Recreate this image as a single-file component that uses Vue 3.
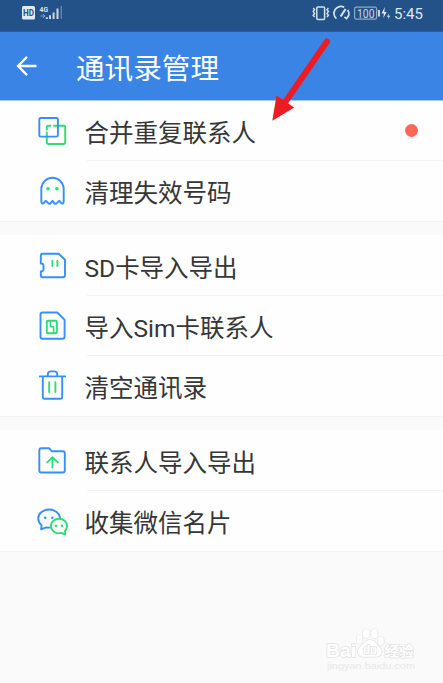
<template>
  <div class="page">
    <header class="status-bar">
      <svg class="status-left" viewBox="0 0 50 20">
        <rect x="2" y="3" width="13" height="13.5" rx="1.5" fill="#e3e9f1" />
        <text class="hd" x="3" y="12.8" textLength="11" lengthAdjust="spacingAndGlyphs">HD</text>
        <text class="net" x="19.5" y="9" textLength="8.5" lengthAdjust="spacingAndGlyphs">4G</text>
        <path d="M20.5 13h4M23 11.2l2 1.8-2 1.8" stroke="#8ba4c1" stroke-width="1" fill="none" />
        <path d="M26.8 16v-1.8M30 16v-3.8M33.6 16V9.5M37.5 16V5.5" stroke="#cbd7e4" stroke-width="2" />
        <path d="M41.3 16V3" stroke="#6587ae" stroke-width="1.4" />
      </svg>
      <svg class="status-icons" viewBox="0 0 80 20" fill="none" stroke="#d7e1ec" stroke-width="1.5">
        <rect x="5.8" y="4" width="7.8" height="12.4" rx="1" />
        <path d="M2.2 5l1.4 1.8-1.4 1.8 1.4 1.8-1.4 1.8 1.4 1.8M17.4 5L16 6.800l1.4 1.8-1.4 1.8 1.4 1.8-1.4 1.8" />
        <path d="M25.4 15.6A6.9 6.9 0 0 1 33.2 4.3M36.7 7a6.9 6.9 0 0 1-1.2 8.6l-2-1.8" stroke-width="1.7" />
        <path d="M29.6 13.5l5-7.5" stroke-width="2.2" />
        <rect x="43.6" y="4.2" width="22" height="12" rx="1.6" stroke="#8fa8c5" stroke-width="1.2" />
        <path d="M68 7v6.5" stroke-width="1.8" />
        <text class="battery" x="46" y="14.5" textLength="17.6" lengthAdjust="spacingAndGlyphs">100</text>
        <path d="M73.8 4l-3.3 6.500h2.4l-.6 4.500 3.4-6h-2.4zM77.6 10.5l-1.6 3.2h1.5l-.3 2.8 1.9-3.8h-1.5z" fill="#e3e9f1" stroke="none" />
      </svg>
      <span class="clock">5:45</span>
    </header>

    <div class="title-bar">
      <svg class="back" viewBox="0 0 22 22">
        <path d="M11 1.9L2 11l9 9.1M2 11h18.5" />
      </svg>
      <h1>通讯录管理</h1>
    </div>

    <main>
      <section v-for="(group, idx) in groups" :key="idx" class="group">
        <div v-for="item in group" :key="item.icon" class="row">
          <svg class="icon" viewBox="0 0 32 32">
            <template v-if="item.icon === 'merge'">
              <path class="green" d="M10.8 14.5v-2.3q0-1.4 1.4-1.4h2.3M18 10.8h9.8q1.4 0 1.4 1.4v15.4q0 1.4-1.4 1.4H12.2q-1.4 0-1.4-1.4V17.5" />
              <rect class="blue" x="3.3" y="3" width="18.6" height="18.6" rx="1.4" />
            </template>
            <template v-else-if="item.icon === 'ghost'">
              <path class="blue" d="M5.3 26V14a11.2 11.2 0 0 1 22.4 0v12q0 3.5-2.3 2.2l-2.1-2.4-2.8 2.6q-1 .7-2 0l-2-2.6-2 2.6q-1 .7-2 0l-2.8-2.6-2.1 2.4Q5.3 29.5 5.3 26z" />
              <circle class="dot" cx="12" cy="13.8" r="1.8" />
              <circle class="dot" cx="20.9" cy="13.8" r="1.8" />
            </template>
            <template v-else-if="item.icon === 'sd'">
              <path class="blue" d="M7 3.7h15.7l6.3 6v15.6q0 2-2 2H6.8q-2 0-2-2v-3.8q2.7-.2 2.7-2v-4q0-1.8-2.7-2V5.7q0-2 2.2-2z" />
              <path class="green" d="M16.4 10.8v5.2M21.4 10.8v5.2" />
            </template>
            <template v-else-if="item.icon === 'sim'">
              <path class="blue" d="M6.5 2.5h14.8l7.3 7.3v16.9q0 2-2 2H6.5q-2 0-2-2V4.5q0-2 2-2z" />
              <rect class="green" x="10.8" y="10.8" width="10" height="12.4" rx="1" />
              <path class="green thin" d="M14.4 11.5v5.2h3.2v6" />
            </template>
            <template v-else-if="item.icon === 'trash'">
              <path class="blue" d="M3.8 6.4h25.4M6.8 6.4V27q0 1.8 1.8 1.8h15.8q1.8 0 1.8-1.8V6.4M11.8 6.2V4.4q0-3 3-3h3.4q3 0 3 3v1.8" />
              <path class="green" d="M13.2 12.3v9.8M19.4 12.3v9.8" />
            </template>
            <template v-else-if="item.icon === 'folder'">
              <path class="blue" d="M5.3 3.2h7.2q.8 0 1.4.8l1.7 2.3h11.2q2 0 2 2v17.2q0 2-2 2H5.3q-2 0-2-2V5.2q0-2 2-2z" />
              <path class="green" d="M16.5 22.6V12.5M11.2 17.4l5.3-5.2 5.3 5.2" />
            </template>
            <template v-else>
              <path class="blue" d="M14.2 22.6q-2 .2-4-.3l-5.1 2 .5-4A9.2 9.2 0 0 1 2.2 13.5C2.2 8.4 7.3 4.5 13.3 4.5c5.6 0 10.2 3.6 10.9 8.3" />
              <path class="green" d="M29 26l.3 3.6-3.7-1.7c-5.7 1.7-10.6-2-10.6-6.8 0-4.2 3.6-7.4 8-7.4s8 3.2 8 7.4c0 1.9-.7 3.6-2 4.9z" />
              <circle class="blue-fill" cx="9.2" cy="12.8" r="1.3" />
              <circle class="blue-fill" cx="16.3" cy="12.8" r="1.3" />
              <circle class="dot" cx="19.9" cy="20.7" r="1.3" />
              <circle class="dot" cx="26" cy="20.7" r="1.3" />
            </template>
          </svg>
          <div class="label">
            <span>{{ item.title }}</span>
            <i v-if="item.badge" class="badge"></i>
          </div>
        </div>
      </section>
    </main>

    <svg class="pointer" viewBox="0 0 64 90">
      <path d="M57 7.5L16 67" stroke="#ed1c24" stroke-width="6" stroke-linecap="round" />
      <path d="M2.3 86.8L6.5 61.5l17.7 12z" fill="#ed1c24" />
    </svg>

    <svg class="watermark" viewBox="0 0 100 46">
      <g class="mark">
        <text class="brand" x="2" y="28.5" textLength="30" lengthAdjust="spacingAndGlyphs">Bai</text>
        <ellipse cx="35.5" cy="11.5" rx="3" ry="4.4" />
        <ellipse cx="42.3" cy="5.8" rx="3.3" ry="4.7" />
        <ellipse cx="50.5" cy="5.8" rx="3.3" ry="4.7" />
        <ellipse cx="57" cy="13" rx="3" ry="4.4" />
        <path d="M46 12c5 0 6 4 9 6.5 4.5 3.5 3.5 10-2.5 10.2H39c-6-.2-7-6.7-2.5-10.2C39.5 16 41 12 46 12z" />
        <text class="du" x="39" y="26" textLength="14" lengthAdjust="spacingAndGlyphs">du</text>
        <text class="cn" x="60.5" y="27.5" textLength="29" lengthAdjust="spacingAndGlyphs">经验</text>
      </g>
      <text class="site" x="3" y="40.5" textLength="88" lengthAdjust="spacingAndGlyphs">jingyan.baidu.com</text>
    </svg>
  </div>
</template>

<script setup>
const groups = [
  [
    { icon: 'merge', title: '合并重复联系人', badge: true },
    { icon: 'ghost', title: '清理失效号码' }
  ],
  [
    { icon: 'sd', title: 'SD卡导入导出' },
    { icon: 'sim', title: '导入Sim卡联系人' },
    { icon: 'trash', title: '清空通讯录' }
  ],
  [
    { icon: 'folder', title: '联系人导入导出' },
    { icon: 'wechat', title: '收集微信名片' }
  ]
]
</script>

<style>
body {
  margin: 0;
}
</style>

<style scoped>
.page {
  position: relative;
  width: 443px;
  height: 683px;
  overflow: hidden;
  background: #fafafa;
  color: #363636;
  font-family: Roboto, "Noto Sans CJK SC", sans-serif;
}

.status-bar {
  display: flex;
  align-items: flex-start;
  box-sizing: border-box;
  height: 32px;
  padding: 3px 19px 0 20px;
  background: #225288;
  border-bottom: 1px solid #2a60a2;
}

.status-left {
  width: 50px;
  height: 20px;
}

.status-icons {
  width: 80px;
  height: 20px;
  margin-left: auto;
}

.hd {
  font-size: 8.5px;
  font-weight: 700;
  fill: #225288;
}

.net {
  font-size: 8px;
  font-weight: 700;
  fill: #dce4ee;
}

.battery {
  font-size: 12px;
  fill: #cbd7e4;
  stroke: none;
}

.clock {
  width: 30px;
  margin-left: 3px;
  font-size: 15px;
  line-height: 22px;
  color: #dfe7f0;
  white-space: nowrap;
}

.title-bar {
  display: flex;
  align-items: center;
  height: 68px;
  padding-left: 16px;
  background: #3984e4;
  border-bottom: 1px solid #a9cbf5;
}

.back {
  width: 22px;
  height: 22px;
  fill: none;
  stroke: #fff;
  stroke-width: 2.3;
}

h1 {
  margin: 0 0 0 38px;
  padding-top: 5px;
  font-size: 28.6px;
  font-weight: 400;
  line-height: 40px;
  color: #fff;
}

.group {
  margin-bottom: 13px;
  background: #fefefe;
  border-bottom: 1px solid #f2f2f2;
}

.group + .group {
  padding-top: 1px;
}

.row {
  display: flex;
  align-items: center;
  height: 60px;
  padding-left: 36px;
}

.icon {
  width: 32px;
  height: 32px;
  fill: none;
}

.icon .blue,
.icon .green {
  stroke-width: 1.9;
  stroke-linecap: round;
  stroke-linejoin: round;
}

.icon .thin {
  stroke-width: 1.5;
}

.blue {
  stroke: #3790fa;
}

.green {
  stroke: #2fdc75;
}

.blue-fill {
  fill: #3790fa;
}

.dot {
  fill: #2fdc75;
}

.label {
  display: flex;
  flex: 1;
  align-items: center;
  justify-content: space-between;
  box-sizing: border-box;
  height: 60px;
  margin-left: 19px;
  padding-right: 25px;
  border-bottom: 1px solid #f2f2f2;
  font-size: 24.5px;
  line-height: 34px;
}

.label span {
  margin-left: -2.5px;
  padding-top: 6px;
}

.row:last-child .label {
  border-bottom-color: transparent;
}

.badge {
  width: 13px;
  height: 13px;
  border-radius: 50%;
  background: #ff6859;
}

.pointer {
  position: absolute;
  left: 270px;
  top: 34px;
  width: 64px;
  height: 90px;
}

.watermark {
  position: absolute;
  left: 324px;
  top: 628px;
  width: 100px;
  height: 46px;
  font-family: "Liberation Sans", "Noto Sans CJK SC", sans-serif;
}

.mark {
  fill: #fff;
  stroke: #e2e2e2;
  stroke-width: 1.4;
  paint-order: stroke;
}

.brand {
  font-size: 19px;
  font-weight: 700;
}

.du {
  font-size: 13px;
  font-weight: 700;
}

.cn {
  font-size: 14px;
  font-weight: 700;
}

.site {
  font-size: 9.5px;
  fill: #e8e8e8;
}
</style>
